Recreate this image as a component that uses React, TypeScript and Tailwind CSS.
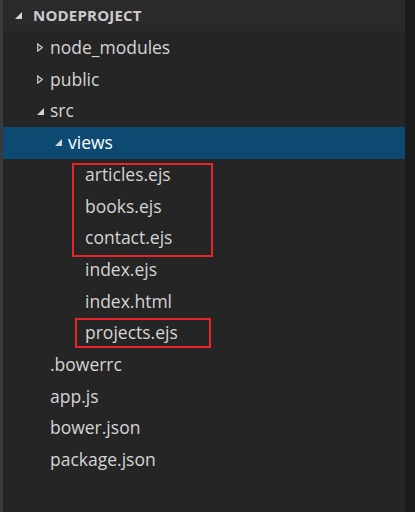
import React from "react";

const font = { fontFamily: '"Open Sans", "Noto Sans", sans-serif' };

function Collapsed() {
  return (
    <svg width="6" height="9" viewBox="0 0 6 9" className="shrink-0">
      <path d="M0.75 0.9 L5.2 4.5 L0.75 8.1 Z" fill="none" stroke="#c5c5c5" strokeWidth="1.3" strokeLinejoin="miter" />
    </svg>
  );
}

function Expanded() {
  return (
    <svg width="7" height="7" viewBox="0 0 7 7" className="shrink-0">
      <path d="M7 0 L7 7 L0 7 Z" fill="#d4d4d4" />
    </svg>
  );
}

type Row = { label: string; indent: number; kind: "collapsed" | "expanded" | "file"; selected?: boolean };

const rows: Row[] = [
  { label: "node_modules", indent: 0, kind: "collapsed" },
  { label: "public", indent: 0, kind: "collapsed" },
  { label: "src", indent: 0, kind: "expanded" },
  { label: "views", indent: 1, kind: "expanded", selected: true },
  { label: "articles.ejs", indent: 2, kind: "file" },
  { label: "books.ejs", indent: 2, kind: "file" },
  { label: "contact.ejs", indent: 2, kind: "file" },
  { label: "index.ejs", indent: 2, kind: "file" },
  { label: "index.html", indent: 2, kind: "file" },
  { label: "projects.ejs", indent: 2, kind: "file" },
  { label: ".bowerrc", indent: 0, kind: "file" },
  { label: "app.js", indent: 0, kind: "file" },
  { label: "bower.json", indent: 0, kind: "file" },
  { label: "package.json", indent: 0, kind: "file" },
];

const textLeft = ["pl-[47px]", "pl-[64px]", "pl-[82px]"];
const iconLeft = ["pl-[34px]", "pl-[52px]", "pl-[70px]"];

function TreeRow({ row }: { row: Row }) {
  const bg = row.selected ? "bg-[#0d4a72] w-[402px]" : "";
  if (row.kind === "file") {
    return (
      <div className={`h-[31.7px] flex items-center ${textLeft[row.indent]} ${bg}`}>
        <span className="text-[17.5px] text-[#d4d4d4] leading-none">{row.label}</span>
      </div>
    );
  }
  return (
    <div className={`h-[31.7px] flex items-center ${iconLeft[row.indent]} ${bg}`}>
      <div className="w-[13px] flex items-center">
        {row.kind === "collapsed" ? <Collapsed /> : <Expanded />}
      </div>
      <span className={`text-[17.5px] leading-none ${row.selected ? "text-white" : "text-[#d4d4d4]"}`}>{row.label}</span>
    </div>
  );
}

export default function App() {
  return (
    <div className="w-[415px] h-[512px] bg-[#1b1b1c] flex" style={font}>
      <div className="w-[3px] bg-[#3a3a3a]" />
      <div className="w-[402px] bg-[#252526] flex flex-col">
        <div className="h-[31px] bg-[#2a2a2b] flex items-center pl-[12px]">
          <div className="w-[18px] flex items-center">
            <Expanded />
          </div>
          <span className="text-[15px] font-bold text-[#cccccc] tracking-[0.2px]">NODEPROJECT</span>
        </div>
        <div className="flex flex-col pt-[1px] relative">
          {rows.map((r) => (
            <TreeRow key={r.label} row={r} />
          ))}
          <div className="absolute left-[69px] top-[132px] w-[141px] h-[94px] border-2 border-[#e8232b]" />
          <div className="absolute left-[72px] top-[287px] w-[136px] h-[30px] border-2 border-[#e8232b]" />
        </div>
      </div>
      <div className="w-[10px]" />
    </div>
  );
}
